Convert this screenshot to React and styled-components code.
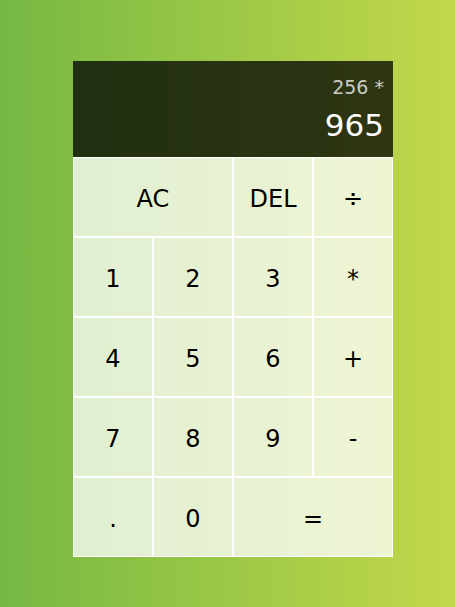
import React from "react";
import styled, { createGlobalStyle } from "styled-components";

const GlobalStyle = createGlobalStyle`
  * {
    box-sizing: border-box;
  }
  body {
    margin: 0;
    font-family: "DejaVu Sans", Verdana, sans-serif;
    font-weight: normal;
  }
`;

const Page = styled.div`
  min-height: 100vh;
  padding: 61px 0 0 73px;
  background: linear-gradient(to right, #75b843, #c3d84a);
`;

const Grid = styled.div`
  display: grid;
  grid-template-columns: repeat(4, 80px);
  grid-template-rows: 96px repeat(5, 80px);
`;

const Display = styled.div`
  grid-column: 1 / -1;
  background-color: rgba(0, 0, 0, 0.75);
  display: flex;
  flex-direction: column;
  align-items: flex-end;
  justify-content: space-around;
  padding: 10px 9px 10px 10px;
  word-wrap: break-word;
  word-break: break-all;
`;

const Previous = styled.div`
  color: rgba(255, 255, 255, 0.75);
  font-size: 19px;
`;

const Current = styled.div`
  color: white;
  font-size: 31px;
`;

const Key = styled.button`
  cursor: pointer;
  font-family: "DejaVu Sans", Verdana, sans-serif;
  font-size: 24px;
  color: #000;
  border: 1px solid white;
  outline: none;
  background-color: rgba(255, 255, 255, 0.76);
  grid-column: ${(p) => (p.wide ? "span 2" : "auto")};
  padding: 3px 0 0;
`;

const App = () => {
  return (
    <Page>
      <GlobalStyle />
      <Grid>
        <Display>
          <Previous>256 *</Previous>
          <Current>965</Current>
        </Display>
        <Key wide>AC</Key>
        <Key>DEL</Key>
        <Key>÷</Key>
        <Key>1</Key>
        <Key>2</Key>
        <Key>3</Key>
        <Key>*</Key>
        <Key>4</Key>
        <Key>5</Key>
        <Key>6</Key>
        <Key>+</Key>
        <Key>7</Key>
        <Key>8</Key>
        <Key>9</Key>
        <Key>-</Key>
        <Key>.</Key>
        <Key>0</Key>
        <Key wide>=</Key>
      </Grid>
    </Page>
  );
};

export default App;
